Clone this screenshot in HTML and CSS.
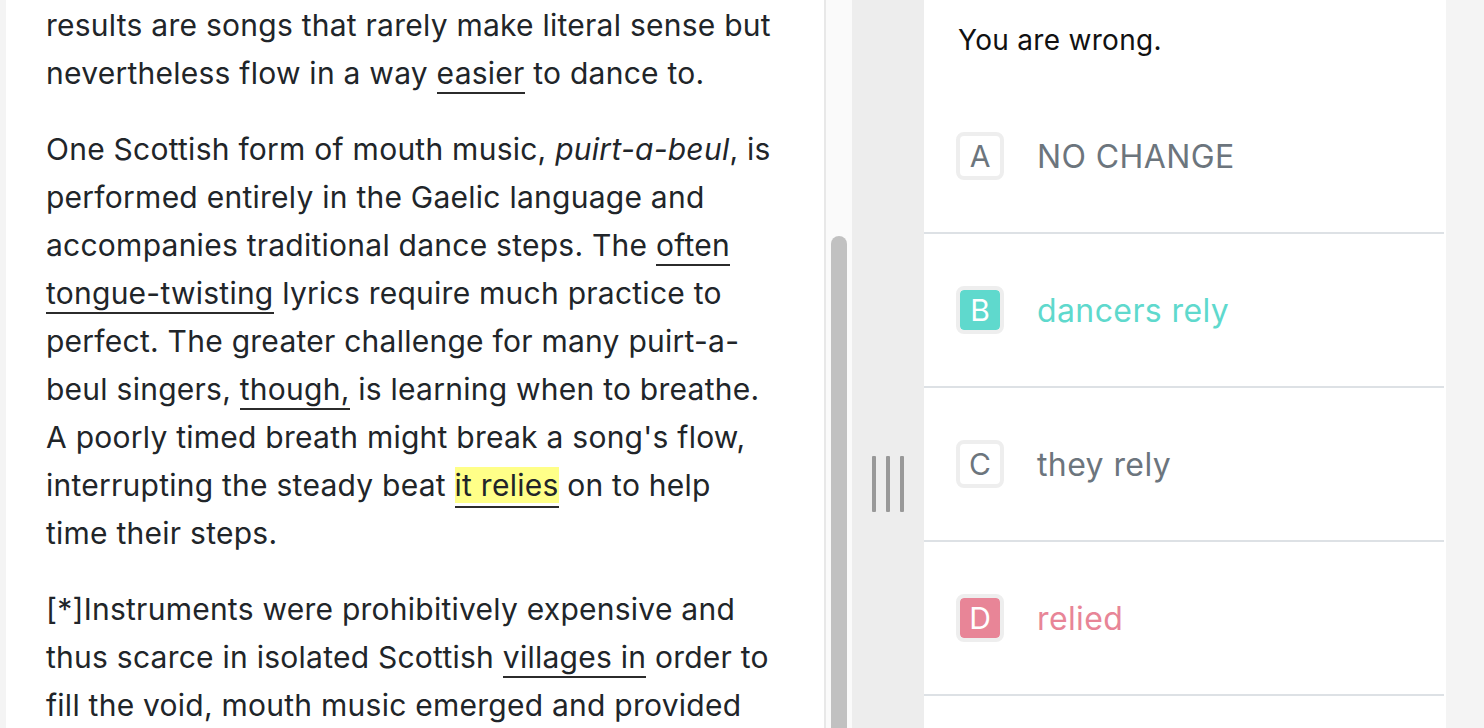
FILE: index.html
```html
<!DOCTYPE html>
<html>
<head>
<meta charset="utf-8">
<link rel="stylesheet" href="styles.css">
</head>
<body>
<div class="app">
  <div class="edge"></div>
  <div class="passage">
    <div class="passage-text">
      <p>results are songs that rarely make literal sense but nevertheless flow in a way <span class="u">easier</span> to dance to.</p>
      <p>One Scottish form of mouth music, <em>puirt-a-beul</em>, is performed entirely in the Gaelic language and accompanies traditional dance steps. The <span class="u">often tongue-twisting</span> lyrics require much practice to perfect. The greater challenge for many puirt-a-beul singers, <span class="u">though,</span> is learning when to breathe. A poorly timed breath might break a song's flow, interrupting the steady beat <span class="u hl">it relies</span> on to help time their steps.</p>
      <p>[*]Instruments were prohibitively expensive and thus scarce in isolated Scottish <span class="u">villages in</span> order to fill the void, mouth music emerged and provided</p>
    </div>
  </div>
  <div class="scrollbar"><div class="thumb"></div></div>
  <div class="divider">
    <div class="handle"><span></span><span></span><span></span></div>
  </div>
  <div class="answers">
    <div class="feedback">You are wrong.</div>
    <div class="option">
      <div class="letter">A</div>
      <div class="choice">NO CHANGE</div>
    </div>
    <div class="option correct">
      <div class="letter">B</div>
      <div class="choice">dancers rely</div>
    </div>
    <div class="option">
      <div class="letter">C</div>
      <div class="choice">they rely</div>
    </div>
    <div class="option wrong">
      <div class="letter">D</div>
      <div class="choice">relied</div>
    </div>
  </div>
  <div class="gutter"></div>
</div>
</body>
</html>
```
FILE: styles.css
```css
html, body {
  margin: 0;
  padding: 0;
  height: 100%;
  overflow: hidden;
  background: #ffffff;
}
body {
  font-family: Inter, "Liberation Sans", sans-serif;
}
.app {
  display: flex;
  height: 728px;
  overflow: hidden;
}
.edge {
  width: 6px;
  flex: none;
  background: #f4f4f4;
}
.passage {
  width: 820px;
  flex: none;
  box-sizing: border-box;
  border-right: 2px solid #e8e8e8;
  overflow: hidden;
  background: #fff;
}
.passage-text {
  padding: 1px 46px 0 40px;
  color: #212529;
  font-size: 30px;
  letter-spacing: 0.25px;
  line-height: 48px;
  hyphens: manual;
}
.passage-text p {
  margin: 0 0 28px 0;
}
.u {
  border-bottom: 2px solid #2b2b2b;
  padding-bottom: 1px;
}
.hl {
  background: #ffff88;
  background-clip: content-box;
  padding-bottom: 3px;
}
.scrollbar {
  width: 26px;
  flex: none;
  background: #fafafa;
  display: flex;
  justify-content: center;
  padding-top: 236px;
  box-sizing: border-box;
}
.thumb {
  width: 16px;
  height: 520px;
  background: #c1c1c1;
  border-radius: 8px 8px 0 0;
}
.divider {
  width: 72px;
  flex: none;
  background: #ededed;
  display: flex;
  align-items: center;
  justify-content: center;
}
.handle {
  display: flex;
  gap: 10px;
  margin-top: 240px;
}
.handle span {
  width: 4px;
  height: 56px;
  background: #999;
  border-radius: 1px;
  filter: blur(0.4px);
}
.answers {
  width: 522px;
  flex: none;
  display: flex;
  flex-direction: column;
}
.feedback {
  height: 80px;
  display: flex;
  align-items: center;
  padding-left: 34px;
  font-size: 28px;
  letter-spacing: 0.3px;
  color: #111;
}
.option {
  height: 152px;
  flex: none;
  border-bottom: 2px solid #dde1e5;
  margin-right: 2px;
  display: flex;
  align-items: center;
  padding-left: 32px;
  color: #6c757d;
}
.letter {
  width: 48px;
  height: 48px;
  box-sizing: border-box;
  border: 4px solid #eeeeee;
  border-radius: 8px;
  background: #fff;
  background-clip: padding-box;
  display: flex;
  align-items: center;
  justify-content: center;
  font-size: 30px;
  margin-right: 33px;
}
.choice {
  font-size: 32px;
  letter-spacing: 0.4px;
}
.correct { color: #5fd9cd; }
.correct .letter { background-color: #5fd9cd; color: #fff; }
.wrong { color: #e88597; }
.wrong .letter { background-color: #e88597; color: #fff; }
.gutter {
  flex: 1;
  background: #f4f4f4;
}
```
